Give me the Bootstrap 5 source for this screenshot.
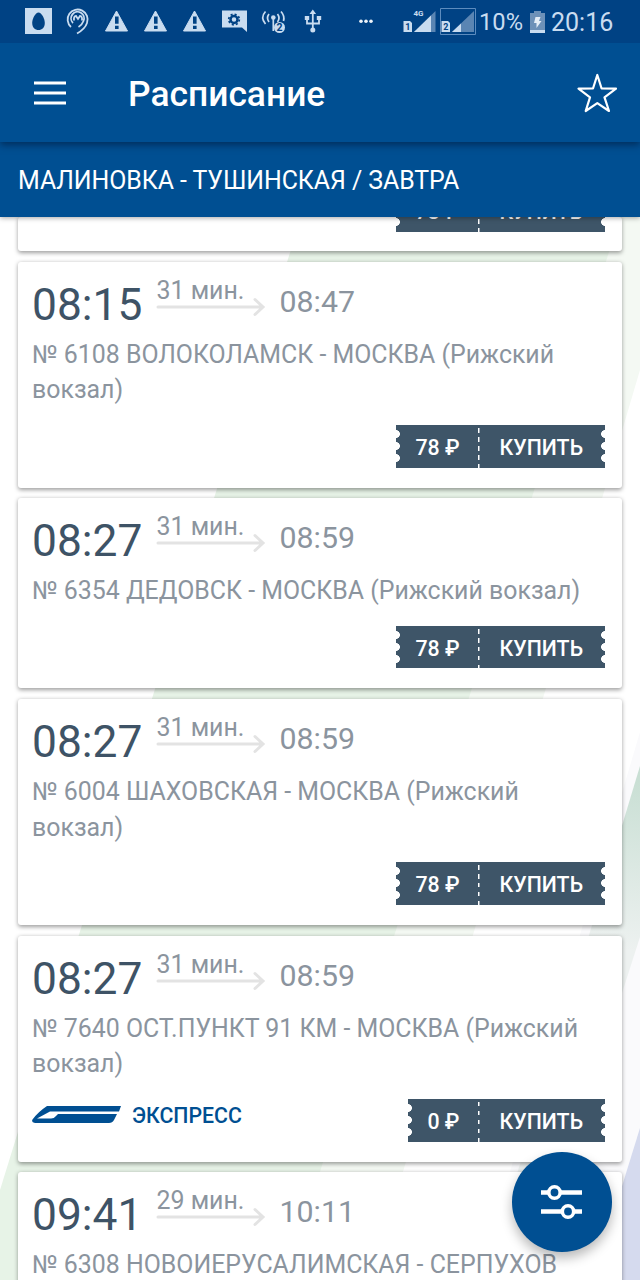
<!DOCTYPE html>
<html lang="ru">
<head>
<meta charset="utf-8">
<meta name="viewport" content="width=device-width, initial-scale=1">
<title>Расписание</title>
<link href="https://cdn.jsdelivr.net/npm/bootstrap@5.3.0/dist/css/bootstrap.min.css" rel="stylesheet">
<style>
body{font-family:Roboto,"Noto Sans",sans-serif;background:#fff;height:1280px;width:640px;color:#8b949e}
svg{display:block;flex:none}
.statusbar{height:43px;background:#004284;color:#c9dcf0;z-index:4}
.statusbar .sys{font-size:25px;line-height:43px;padding-top:2px;margin-left:-1px}
.appbar{height:99px;background:#004f92;z-index:3;box-shadow:0 3px 7px rgba(0,20,50,.55)}
.appbar h1{font-size:35.4px;font-weight:500;line-height:1;padding-top:4px}
.route{height:75px;background:#004f92;z-index:2;font-size:24.9px;letter-spacing:-.05px;box-shadow:0 1px 5px rgba(0,0,0,.35)}
.backdrop{inset:0;z-index:0}
.trips{gap:10.6px;padding:0 18px}
.trip{border:0;border-radius:3px;box-shadow:0 1.5px 4px rgba(0,0,0,.38);height:226px;flex:none}
.trip .card-body{padding:21px 17.500px 20px 14px}
.trip.short{height:190.2px}
.trip.cut{height:34px}
.trip.cut .card-body{padding-top:0;padding-bottom:19.500px;height:34px;flex:none}
.depart{font-size:44.3px;line-height:44px;color:#3e5366;width:124.500px}
.span-box{width:123px;margin-top:-4px}
.dur{font-size:24.9px;line-height:24px}
.arrive{font-size:30.3px;line-height:38px}
.route-name{font-size:24.9px;line-height:35.6px;margin-top:10px}
.ticket{height:42.6px;background:#3e5568;color:#fff;font-size:21.3px;font-weight:500;line-height:45.5px;flex:none}
.ticket::before,.ticket::after{content:"";position:absolute;top:2.9px;height:36px;width:4px;background:radial-gradient(circle at 0 6px,#fff 3.6px,transparent 4.2px) 0 0/4px 12px repeat-y}
.ticket::before{left:0}
.ticket::after{right:0;transform:scaleX(-1)}
.price{padding:0 18.500px 0 19.5px}
.buy{width:126.500px;height:42.6px;padding-left:21.500px;background:repeating-linear-gradient(#fff 0 4.5px,transparent 4.5px 9px) 0 2.8px/1.5px 100% no-repeat}
.express{color:#004f92;font-size:21.3px;font-weight:500;gap:11px;margin-bottom:10px;line-height:32px}
.express span{padding-top:3px}
.fab{width:99.5px;height:99.5px;right:28.5px;bottom:28.5px;border:0;background:#004f92;z-index:5;box-shadow:0 6px 12px rgba(0,0,0,.28)}
</style>
</head>
<body class="d-flex flex-column overflow-hidden position-relative">
<svg width="0" height="0" class="position-absolute">
  <symbol id="arrow" viewBox="0 0 110 20"><path d="M2 10H106M99 2.5L107 10L99 17.5" fill="none" stroke="#e3e3e3" stroke-width="3" stroke-linecap="round"/></symbol>
  <symbol id="warn" viewBox="0 0 24 22"><path d="M12 1L23 21H1Z" fill="#c9dcf0" stroke="#c9dcf0" stroke-linejoin="round"/><path d="M10.500 6.500h3.600v7.200h-3.600zM10.500 15.800h3.600v3.200h-3.600z" fill="#004284"/></symbol>
</svg>

<header class="statusbar position-relative d-flex flex-none align-items-center">
  <svg width="480" height="43" viewBox="0 0 480 43" fill="none">
    <path d="M25 8h27v26H25z" fill="#c9dcf0"/>
    <path d="M38.500 12.500c-3 0-6.300 6-6.300 10.500 0 4.500 2.800 7 6.300 7s6.300-2.500 6.300-7c0-4.500-3.300-10.500-6.300-10.500z" fill="#004284"/>
    <g stroke="#c9dcf0" stroke-width="1.800">
      <path d="M71 27A10 10 0 1 1 87 23Q85 29 77 33.500"/>
      <path d="M73 23A6.500 6.500 0 1 1 83.500 21Q82 25 78.500 27"/>
      <path d="M74 20.500Q73.500 16 76 16L78 19L80 16Q82.500 16 82 20.500"/>
    </g>
    <use href="#warn" x="104.500" y="10" width="24" height="22"/>
    <use href="#warn" x="143.500" y="10" width="24" height="22"/>
    <use href="#warn" x="182.500" y="10" width="24" height="22"/>
    <path d="M222 10.500h25v21.500l-5-4.500h-20z" fill="#c9dcf0"/>
    <circle cx="234" cy="19.500" r="3.500" stroke="#004284" stroke-width="2.500"/>
    <circle cx="234" cy="19.500" r="5.300" stroke="#004284" stroke-width="1.700" stroke-dasharray="2.080 2.080"/>
    <g stroke="#c9dcf0" stroke-width="1.700">
      <path d="M265.500 11.500q-5.500 6 0 12.500M269 14q-3 4 0 8M277.500 14q3 4 0 8M281 11.500q4 4.500 2.500 9.500M273.300 18v13"/>
    </g>
    <circle cx="273.300" cy="17.500" r="2.300" fill="#c9dcf0"/>
    <circle cx="279.500" cy="27.500" r="5.500" fill="#c9dcf0"/>
    <text x="276.600" y="31.300" font-size="10.500" font-weight="700" fill="#004284">2</text>
    <g stroke="#c9dcf0" stroke-width="1.800"><path d="M312.800 13v17M307 17v6.500h12V17"/></g>
    <path d="M312.800 9.500l3.300 4.500h-6.600zM304.800 16h4.400v4h-4.400zM316.800 16h4.400v4h-4.400z" fill="#c9dcf0"/>
    <circle cx="312.800" cy="30" r="2.500" fill="#c9dcf0"/>
    <g fill="#eef4fa"><circle cx="361" cy="21.300" r="1.800"/><circle cx="366" cy="21.300" r="1.800"/><circle cx="371" cy="21.300" r="1.800"/></g>
    <path d="M435.500 11v21H414z" fill="#5a85b3"/><path d="M431 15.500V32h-17z" fill="#c9dcf0"/>
    <text x="413.500" y="15.500" font-size="8" font-weight="700" fill="#c9dcf0">4G</text>
    <path d="M403.500 21h6.500l2 2v9h-8.500zM441.500 21h6.500l2 2v9h-8.500z" fill="#c9dcf0"/>
    <g font-size="9" font-weight="700" fill="#004284"><text x="405.200" y="30.300">1</text><text x="443.200" y="30.300">2</text></g>
    <path d="M440.500 8.500h35v26h-35z" stroke="#5d8cbe"/>
    <path d="M474 11v21h-22z" fill="#5a85b3"/><path d="M461 23.500V32h-9z" fill="#c9dcf0"/>
  </svg>
  <div class="sys d-flex align-items-center">
    <span style="font-size:23.700px">10%</span>
    <svg width="15" height="24" viewBox="0 0 15 24" style="margin-left:7px"><path d="M4 0h7v2h4v20H0V2h4z" fill="#6d91b8"/><path d="M0 19h15v3H0z" fill="#c9dcf0"/><path d="M5.500 6h5L9 10h2.500L6.500 17V12H4z" fill="#e5eef7"/></svg>
    <span style="margin-left:6px">20:16</span>
  </div>
</header>

<nav class="appbar navbar p-0 position-relative d-flex flex-nowrap text-white">
  <svg width="32" height="24" viewBox="0 0 32 24" style="margin-left:34px"><path d="M0 2h32M0 12h32M0 22h32" stroke="#fff" stroke-width="3.200"/></svg>
  <h1 class="mb-0 me-auto" style="margin-left:62px">Расписание</h1>
  <svg width="44" height="44" viewBox="0 0 44 44" style="margin-right:21px"><path d="M22.300 4L26.600 17.500L41 17.700L29.500 26.300L34 40L22.300 32.200L10.700 40L15 26.300L3.500 17.700L18 17.500Z" fill="none" stroke="#fff" stroke-width="2.200" stroke-linejoin="round"/></svg>
</nav>
<div class="route position-relative d-flex align-items-center text-white" style="padding:3px 18px 0">МАЛИНОВКА - ТУШИНСКАЯ / ЗАВТРА</div>

<main class="flex-grow-1 overflow-hidden position-relative" style="height:1063px">
  <svg class="backdrop position-absolute" width="640" height="1063" viewBox="0 217 640 1063">
    <defs><linearGradient id="fade" gradientUnits="userSpaceOnUse" x1="640" y1="780" x2="625" y2="950"><stop stop-color="#c9dfd4"/><stop offset="1" stop-color="#edf1f0"/></linearGradient></defs>
    <path d="M620 217H640V370L371 1280H280Z" fill="#f4f9f3"/>
    <path d="M301 217H620L286 1280H0V1190Z" fill="#e7f3e7"/>
    <path d="M640 732V1280H478Z" fill="#fafafc"/>
    <path d="M640 766V937L530 1280H485Z" fill="url(#fade)"/>
    <path d="M640 1128V1280H593Z" fill="#d5daee"/>
  </svg>
  <div class="trips d-flex flex-column position-relative">
    <article class="trip card cut"><div class="card-body d-flex flex-column justify-content-end align-items-end">
      <div class="ticket position-relative d-flex"><span class="price">78 ₽</span><span class="buy">КУПИТЬ</span></div>
    </div></article>

    <article class="trip card"><div class="card-body d-flex flex-column">
      <div class="d-flex"><div class="depart">08:15</div><div class="span-box"><div class="dur">31 мин.</div><svg width="110" height="20" style="margin-top:-6px;margin-left:-1px"><use href="#arrow"/></svg></div><div class="arrive">08:47</div></div>
      <div class="route-name">№ 6108 ВОЛОКОЛАМСК - МОСКВА (Рижский вокзал)</div>
      <div class="d-flex justify-content-end mt-auto"><div class="ticket position-relative d-flex"><span class="price">78 ₽</span><span class="buy">КУПИТЬ</span></div></div>
    </div></article>

    <article class="trip card short"><div class="card-body d-flex flex-column">
      <div class="d-flex"><div class="depart">08:27</div><div class="span-box"><div class="dur">31 мин.</div><svg width="110" height="20" style="margin-top:-6px;margin-left:-1px"><use href="#arrow"/></svg></div><div class="arrive">08:59</div></div>
      <div class="route-name">№ 6354 ДЕДОВСК - МОСКВА (Рижский вокзал)</div>
      <div class="d-flex justify-content-end mt-auto"><div class="ticket position-relative d-flex"><span class="price">78 ₽</span><span class="buy">КУПИТЬ</span></div></div>
    </div></article>

    <article class="trip card"><div class="card-body d-flex flex-column">
      <div class="d-flex"><div class="depart">08:27</div><div class="span-box"><div class="dur">31 мин.</div><svg width="110" height="20" style="margin-top:-6px;margin-left:-1px"><use href="#arrow"/></svg></div><div class="arrive">08:59</div></div>
      <div class="route-name">№ 6004 ШАХОВСКАЯ - МОСКВА (Рижский вокзал)</div>
      <div class="d-flex justify-content-end mt-auto"><div class="ticket position-relative d-flex"><span class="price">78 ₽</span><span class="buy">КУПИТЬ</span></div></div>
    </div></article>

    <article class="trip card"><div class="card-body d-flex flex-column">
      <div class="d-flex"><div class="depart">08:27</div><div class="span-box"><div class="dur">31 мин.</div><svg width="110" height="20" style="margin-top:-6px;margin-left:-1px"><use href="#arrow"/></svg></div><div class="arrive">08:59</div></div>
      <div class="route-name">№ 7640 ОСТ.ПУНКТ 91 КМ - МОСКВА (Рижский вокзал)</div>
      <div class="d-flex justify-content-between align-items-end mt-auto">
        <div class="express d-flex align-items-center">
          <svg width="89" height="17" viewBox="0 0 89 17"><path d="M15 0H89L87 5.500H18L5 12.500H19Q22 12.500 24 10L26 8H85L82 14Q80.500 17 77 17H3Q-1 16.500 .5 13.500Q6 6 15 0Z" fill="#004f92"/></svg>
          <span>ЭКСПРЕСС</span>
        </div>
        <div class="ticket position-relative d-flex"><span class="price">0 ₽</span><span class="buy">КУПИТЬ</span></div>
      </div>
    </div></article>

    <article class="trip card"><div class="card-body d-flex flex-column">
      <div class="d-flex"><div class="depart">09:41</div><div class="span-box"><div class="dur">29 мин.</div><svg width="110" height="20" style="margin-top:-6px;margin-left:-1px"><use href="#arrow"/></svg></div><div class="arrive">10:11</div></div>
      <div class="route-name">№ 6308 НОВОИЕРУСАЛИМСКАЯ - СЕРПУХОВ</div>
    </div></article>
  </div>
</main>

<button class="fab position-absolute rounded-circle d-flex align-items-center justify-content-center p-0" aria-label="Фильтр">
  <svg width="41" height="36" viewBox="0 0 41 36" fill="#004f92" stroke="#fff" stroke-width="4.500"><path d="M0 8.500H41M0 27.500H41"/><circle cx="13.500" cy="8.500" r="5.700" stroke-width="3.600"/><circle cx="27" cy="27.500" r="5.700" stroke-width="3.600"/></svg>
</button>
<script src="https://cdn.jsdelivr.net/npm/bootstrap@5.3.0/dist/js/bootstrap.bundle.min.js"></script>
</body>
</html>
